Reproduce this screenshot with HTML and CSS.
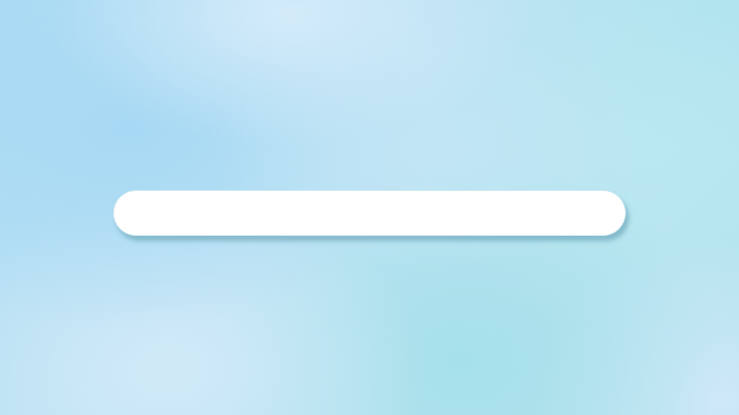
FILE: index.html
```html
<!DOCTYPE html>
<html lang="en">
<head>
<meta charset="utf-8">
<title>Search</title>
<link rel="stylesheet" href="styles.css">
</head>
<body>
<main class="stage">
  <div class="pill"><input class="pill-input" type="text" aria-label="Search"></div>
</main>
</body>
</html>
```
FILE: styles.css
```css
html, body {
  margin: 0;
  padding: 0;
  width: 100%;
  height: 100%;
  overflow: hidden;
}
body {
  font-family: "Liberation Sans", Arial, sans-serif;
  background-color: #b3e0ef;
  background-image:
    radial-gradient(ellipse 240px 130px at 290px 15px, rgba(214, 236, 250, 0.95), rgba(214, 236, 250, 0) 100%),
    radial-gradient(ellipse 220px 120px at 430px 150px, rgba(196, 230, 246, 0.8), rgba(196, 230, 246, 0) 100%),
    radial-gradient(ellipse 300px 200px at 130px 130px, rgba(166, 216, 244, 0.9), rgba(166, 216, 244, 0) 100%),
    radial-gradient(ellipse 260px 180px at 170px 370px, rgba(210, 234, 248, 0.95), rgba(210, 234, 248, 0) 100%),
    radial-gradient(ellipse 260px 200px at 460px 360px, rgba(164, 224, 234, 0.9), rgba(164, 224, 234, 0) 100%),
    radial-gradient(ellipse 200px 160px at 720px 400px, rgba(208, 232, 248, 0.95), rgba(208, 232, 248, 0) 100%),
    radial-gradient(ellipse 240px 200px at 650px 140px, rgba(186, 232, 240, 0.9), rgba(186, 232, 240, 0) 100%),
    radial-gradient(ellipse 220px 140px at 720px 10px, rgba(172, 226, 238, 0.9), rgba(172, 226, 238, 0) 100%),
    linear-gradient(135deg, #acdbf4 0%, #bde3f3 45%, #b2e3ec 100%);
}
.stage {
  box-sizing: border-box;
  height: 100%;
  display: flex;
  justify-content: center;
  align-items: flex-start;
  padding-top: 190px;
}
.pill {
  width: 513px;
  height: 46px;
  box-sizing: border-box;
  border-radius: 23px;
  background: #ffffff;
  border: 1px solid #cfe9f3;
  box-shadow: 3px 5px 4px rgba(120, 176, 194, 0.8);
  display: flex;
  align-items: center;
  padding: 0 22px;
}
.pill-input {
  flex: 1;
  border: none;
  outline: none;
  background: transparent;
  font: inherit;
  font-size: 16px;
  color: #333;
}
```
